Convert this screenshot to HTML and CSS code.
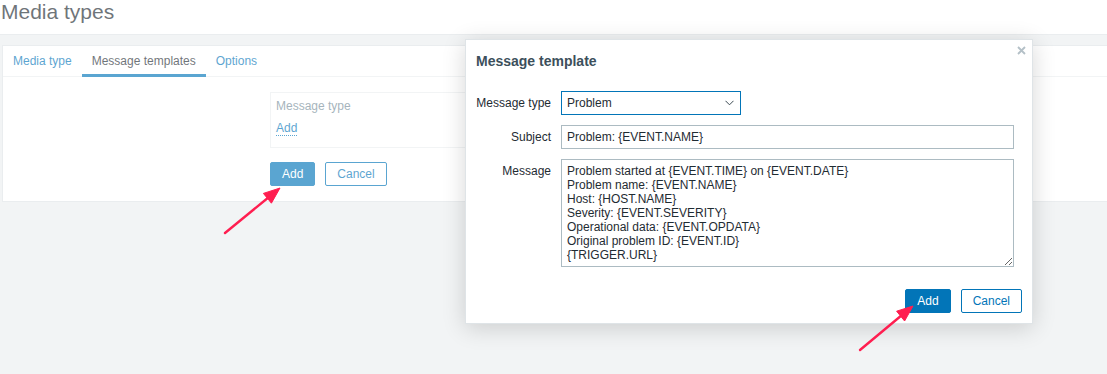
FILE: index.html
```html
<!DOCTYPE html>
<html lang="en">
<head>
  <meta charset="UTF-8" />
  <title>Media types</title>
  <link rel="stylesheet" href="styles.css">
</head>
<body>

  <header class="page-header">
    <h1>Media types</h1>
  </header>

  <main class="content">
    <div class="panel">
      <ul class="tabs">
        <li><a href="#">Media type</a></li>
        <li class="active"><span>Message templates</span></li>
        <li><a href="#">Options</a></li>
      </ul>

      <div class="tab-body">
        <div class="tpl-table">
          <div class="tpl-head">Message type</div>
          <a class="tpl-add" href="#">Add</a>
        </div>
        <div class="btn-row">
          <button class="btn">Add</button>
          <button class="btn btn-alt">Cancel</button>
        </div>
      </div>
    </div>
  </main>

  <div class="overlay"></div>

  <div class="dialog">
    <div class="dialog-head">
      <h4>Message template</h4>
      <span class="dialog-close">
        <svg width="9" height="9" viewBox="0 0 9 9"><path d="M1 1L8 8M8 1L1 8" stroke="#b4c0c7" stroke-width="1.8"/></svg>
      </span>
    </div>

    <div class="dialog-body">
      <label class="form-label">Message type</label>
      <div class="select">
        <span>Problem</span>
        <svg width="9" height="6" viewBox="0 0 9 6"><path d="M0.5 0.8L4.5 4.8L8.5 0.8" fill="none" stroke="#3c4a53" stroke-width="1"/></svg>
      </div>

      <label class="form-label">Subject</label>
      <input class="text-input" type="text" value="Problem: {EVENT.NAME}">

      <label class="form-label">Message</label>
      <textarea class="text-area">Problem started at {EVENT.TIME} on {EVENT.DATE}
Problem name: {EVENT.NAME}
Host: {HOST.NAME}
Severity: {EVENT.SEVERITY}
Operational data: {EVENT.OPDATA}
Original problem ID: {EVENT.ID}
{TRIGGER.URL}</textarea>
    </div>

    <div class="dialog-foot">
      <button class="btn">Add</button>
      <button class="btn btn-alt">Cancel</button>
    </div>
  </div>

  <!-- annotation arrows -->
  <svg class="arrows" width="1107" height="374" viewBox="0 0 1107 374">
    <g fill="#ff1e50" stroke="#ff1e50">
      <line x1="225" y1="233" x2="269" y2="197" stroke-width="2.4" stroke-linecap="round"/>
      <polygon points="280,188 271.4,203.2 263.4,193.4" stroke-width="1"/>
      <line x1="860" y1="350" x2="902" y2="315" stroke-width="2.4" stroke-linecap="round"/>
      <polygon points="913,306 904.6,321 896.6,311.2" stroke-width="1"/>
    </g>
  </svg>

</body>
</html>
```

FILE: styles.css
```css
* { box-sizing: border-box; }
html, body { margin: 0; height: 100%; }
body { font-family: "Liberation Sans", Arial, sans-serif; font-size: 12px; color: #1f2c33; background: #ebeef0; overflow: hidden; position: relative; }
a { color: #0275b8; text-decoration: none; }

.page-header { height: 35px; background: #fff; border-bottom: 1px solid #dfe4e7; padding-left: 1px; }
.page-header h1 { margin: 0; font-size: 21px; line-height: 24px; font-weight: normal; color: #1f2c33; }

.content { padding: 10px 0 0 2px; }
.panel { background: #fff; border: 1px solid #dfe4e7; margin-right: -30px; }

.tabs { list-style: none; margin: 0; padding: 0; display: flex; height: 31px; border-bottom: 1px solid #ebeef0; }
.tabs li { padding: 0 10px; line-height: 30px; height: 31px; }
.tabs li.active { box-shadow: inset 0 -3px 0 #0275b8; color: #1f2c33; }

.tab-body { padding: 15px 0 15px 267px; }
.tpl-table { width: 560px; border: 1px solid #ebeef0; padding: 6px 5px 11px; }
.tpl-head { line-height: 14px; color: #768d99; }
.tpl-add { display: inline-block; margin-top: 9px; line-height: 13px; border-bottom: 1px dotted #0275b8; }
.btn-row { display: flex; gap: 10px; margin-top: 14px; }

.btn { font-family: inherit; font-size: 12px; height: 24px; padding: 0 11px; border: 1px solid #0275b8; border-radius: 2px; background: #0275b8; color: #fff; line-height: 22px; }
.btn-alt { background: #fff; color: #0275b8; }

.overlay { position: absolute; inset: 0; background: rgba(255, 255, 255, 0.35); }

.dialog { position: absolute; left: 465px; top: 39px; width: 568px; background: #fff; border: 1px solid #dfe4e7; box-shadow: 0 4px 22px rgba(0, 0, 0, 0.16); }
.dialog-head { position: relative; padding: 12px 10px 0; }
.dialog-head h4 { margin: 0; font-size: 14px; line-height: 18px; font-weight: bold; color: #3c4f5b; }
.dialog-close { position: absolute; top: 6px; right: 6px; line-height: 0; }

.dialog-body { display: grid; grid-template-columns: 75px 453px; column-gap: 10px; row-gap: 10px; padding: 21px 10px 0; }
.form-label { text-align: right; line-height: 24px; white-space: nowrap; }

.select { width: 180px; height: 24px; border: 1px solid #0275b8; display: flex; align-items: center; justify-content: space-between; padding: 0 6px 0 5px; }
.text-input { height: 24px; border: 1px solid #acbbc2; padding: 0 5px; font-family: inherit; font-size: 12px; color: #1f2c33; }
.text-area { height: 108px; border: 1px solid #acbbc2; padding: 4px 5px; font-family: inherit; font-size: 12px; line-height: 14px; color: #1f2c33; overflow: hidden; resize: vertical; margin: 0; }

.dialog-foot { display: flex; justify-content: flex-end; gap: 10px; padding: 22px 10px 10px; }

.arrows { position: absolute; left: 0; top: 0; pointer-events: none; }
```
